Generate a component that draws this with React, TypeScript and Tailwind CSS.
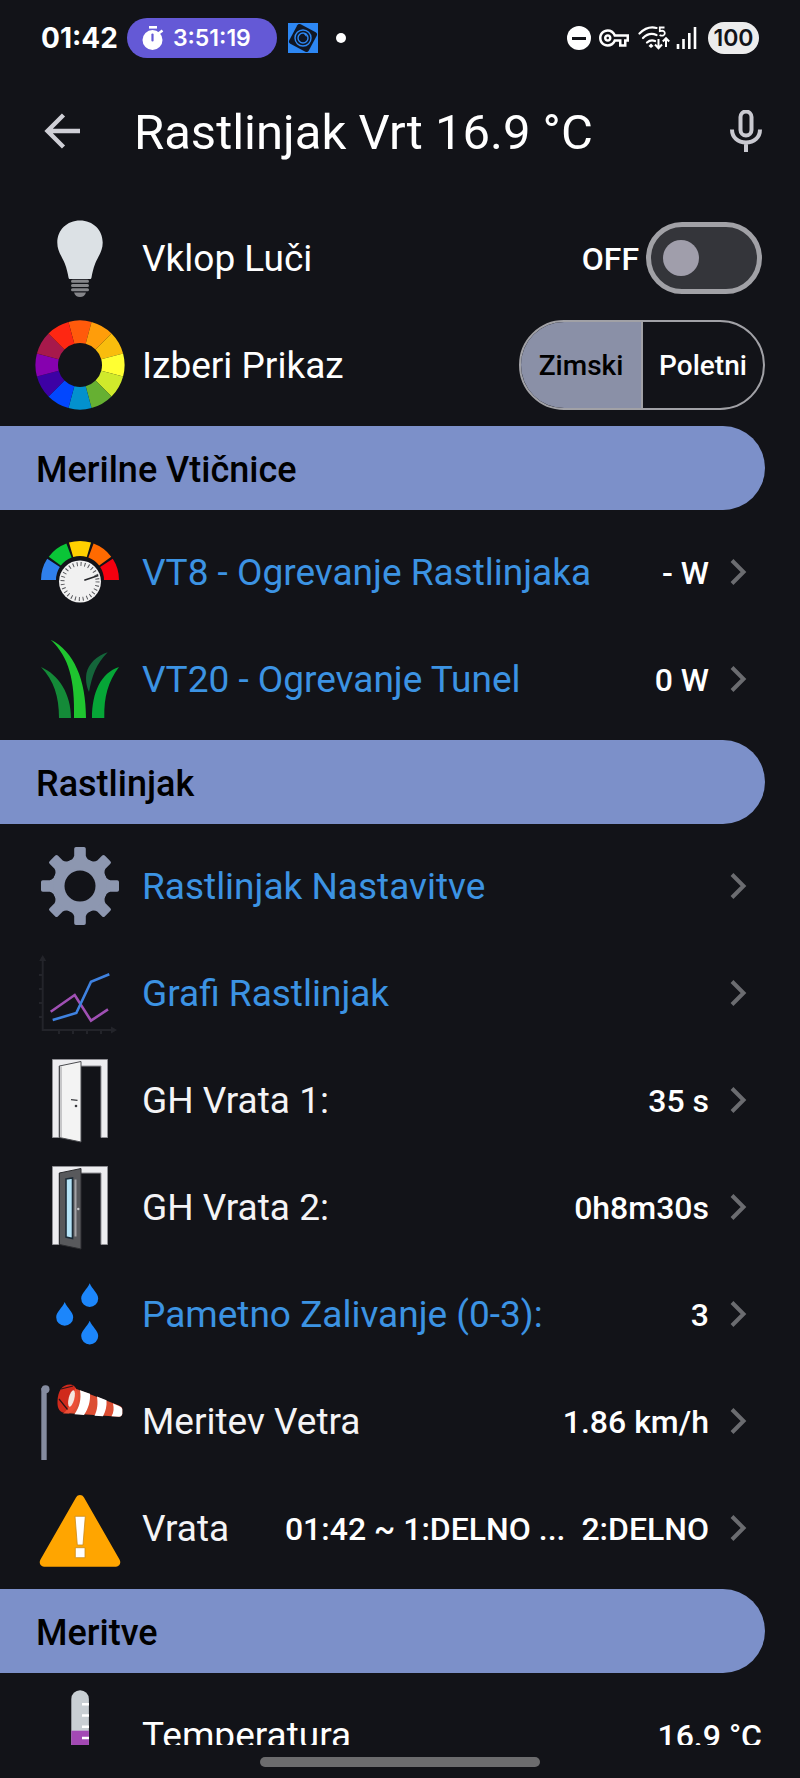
import { useState } from "react";
import type { ReactNode } from "react";
import { MdOutlineVpnKey } from "react-icons/md";

type Item = {
  label: string;
  icon: ReactNode;
  value?: string;
  accent?: boolean;
};

const wheelColors = [
  "#ff5a0b", "#ff9d0a", "#f9bd0d", "#ffff32", "#d0ea2b", "#66b032",
  "#0391ce", "#0247fe", "#3d01a4", "#8601af", "#a7194b", "#fe2712",
];

const gaugeColors = ["#2f80ed", "#0ac537", "#ffd000", "#ff6a00", "#f5000f"];

// Ring slice between two angles (degrees, 0 = right, clockwise)
function slice(cx: number, cy: number, inner: number, outer: number, from: number, to: number) {
  const pt = (r: number, deg: number) => {
    const a = (deg * Math.PI) / 180;
    return `${(cx + r * Math.cos(a)).toFixed(2)} ${(cy + r * Math.sin(a)).toFixed(2)}`;
  };
  return `M${pt(outer, from)}A${outer} ${outer} 0 0 1 ${pt(outer, to)}L${pt(inner, to)}A${inner} ${inner} 0 0 0 ${pt(inner, from)}Z`;
}

function Icon({ children }: { children: ReactNode }) {
  return (
    <svg className="w-[90px] h-[90px] shrink-0" viewBox="0 0 90 90" fill="none" aria-hidden="true">
      {children}
    </svg>
  );
}

function BulbIcon() {
  return (
    <Icon>
      <path fill="#dce1e5" d="M45 7.5C32 7.5 22.3 17 22.3 29.5c0 9 4.700 14 7.500 21 2 5 3 10 3.700 14 .2 1 .8 1.500 1.500 1.500h20c.7 0 1.300-.5 1.500-1.500.7-4 1.700-9 3.700-14 2.800-7 7.500-12 7.500-21C67.700 17 58 7.500 45 7.500z" />
      <path stroke="#85868a" strokeWidth="3" strokeLinecap="round" d="M37.500 68.200h15M37.500 72.500h15M37.500 76.800h15" />
      <path fill="#85868a" d="M39 79.500h12c-1 3-3 4.500-6 4.500s-5-1.500-6-4.500z" />
    </Icon>
  );
}

function WheelIcon() {
  return (
    <Icon>
      {wheelColors.map((color, i) => (
        <path key={color} fill={color} d={slice(45, 45, 22, 44.6, -105 + i * 30, -75 + i * 30)} />
      ))}
    </Icon>
  );
}

function GaugeIcon() {
  return (
    <Icon>
      {gaugeColors.map((color, i) => (
        <path key={color} fill={color} d={slice(45, 53, 24, 39, 180 + i * 36.8, 212.8 + i * 36.8)} />
      ))}
      <circle cx="45" cy="54.500" r="21" fill="#f1f1f1" />
      <circle cx="45" cy="54.500" r="17.500" stroke="#55565a" strokeWidth="4" strokeDasharray="1 2.930" />
      <path stroke="#26272b" strokeWidth="1.600" d="M49.300 53.300l14-4.800" />
    </Icon>
  );
}

function GrassIcon() {
  return (
    <Icon>
      <path fill="#148a38" d="M6 33c18 8 30 27 30 51H24C24 62 19 47 6 33z" />
      <path fill="#14653a" d="M72.700 18.300C61 30 57 42 54 58c-3-7-3.500-13-2.500-19 2-9 10-17 21.200-20.700z" />
      <path fill="#1fc52f" d="M15.700 5.700C39 17 51 46 51 84H39C40 46 34 23 15.700 5.700z" />
      <path fill="#06a637" d="M84 33C66 39 57 58 57 84h12.300C69 62 73 48 84 33z" />
    </Icon>
  );
}

function GearIcon() {
  return (
    <Icon>
      <g fill="#8d97b0">
        {[0, 45, 90, 135].map((deg) => (
          <path key={deg} transform={`rotate(${deg} 45 45)`} d="M41 6h8q1.800 0 1.800 1.800v7q1 4 6 5.500v49.400q-5 1.500-6 5.500v7q0 1.800-1.800 1.800h-8q-1.800 0-1.800-1.800v-7q-1-4-6-5.500V20.300q5-1.500 6-5.500v-7Q39.200 6 41 6z" />
        ))}
      </g>
      <circle cx="45" cy="45" r="22" stroke="#8d97b0" strokeWidth="10" />
      <circle cx="45" cy="45" r="15.500" fill="#121318" />
    </Icon>
  );
}

function ChartIcon() {
  return (
    <Icon>
      <path stroke="#23242a" strokeWidth="2" d="M7.700 9v73H80M4 27h4M4 41h4M4 55h4M4 69h4M24 82v4M38 82v4M52 82v4M66 82v4" />
      <path fill="#23242a" d="M7.700 7l3.500 6h-7zM82 82l-6 3.500v-7z" />
      <path stroke="#a050b4" strokeWidth="2.600" d="M15.700 63.700l24-16.700L56 72.700l17-11.400" />
      <path stroke="#3f82e0" strokeWidth="2.600" d="M17.700 72l23.600-7L56 33.700l18.300-7.400" />
    </Icon>
  );
}

function DoorFrame() {
  return (
    <path fill="#ededf0" stroke="#8f8f94" strokeWidth="1" d="M17.500 4.500h55v78h-6.500V11H24v71.500h-6.500z" />
  );
}

function WhiteDoorIcon() {
  return (
    <Icon>
      <DoorFrame />
      <path fill="#f3f3f3" stroke="#4b4c50" strokeWidth="1" d="M24.500 11L46 6.500V87l-21.500-4.500z" />
      <path stroke="#9a9a9e" strokeWidth="1" d="M26 11.500v71" />
      <path stroke="#3a3b3f" strokeWidth="1.200" d="M36 44.700l6.500.7" />
      <circle cx="41" cy="51" r="1.300" fill="#3a3b3f" />
    </Icon>
  );
}

function GlassDoorIcon() {
  return (
    <Icon>
      <DoorFrame />
      <path fill="#58595c" stroke="#2c2d30" strokeWidth="1" d="M24.500 11L46 6.500V87l-21.500-4.500z" />
      <path fill="#b4e3f7" stroke="#1d2c38" strokeWidth="1.600" d="M31 17l6.500-1v60.500L31 75z" />
      <path stroke="#a3a3a6" strokeWidth="2" d="M40.500 17.500v57" />
      <circle cx="43.300" cy="47" r="1.200" fill="#c9c9cc" />
    </Icon>
  );
}

function DropsIcon() {
  const drop = "c2.500 6 8.500 10 8.500 15.200a8.500 8.500 0 0 1-17 0c0-5.200 6-9.200 8.500-15.200z";
  return (
    <Icon>
      <path fill="#1c86fb" d={`M54.700 14.300${drop}M29.700 33${drop}M54.700 51.700${drop}`} />
    </Icon>
  );
}

function WindsockIcon() {
  return (
    <Icon>
      <path stroke="#858ca0" strokeWidth="5.400" d="M9 12v72" />
      <circle cx="10.500" cy="13.300" r="4" fill="#858ca0" />
      <path fill="#dc4e33" d="M39 12l45 17.500c2 .8 3.300 2 3.300 3.500v4.500c0 2-1.300 3.200-3.300 3.200L30 37z" />
      <path fill="#fff" d="M45 14.300l10 3.500c.5 7-1.500 15-6 21.200l-9.500-.7c5-7 7-15 5.500-24zM62 20.500l9.500 3.700c.5 6-1 11-3.500 16l-8.500-.5c3-6 3.500-12 2.500-19.200zM78 27.500l6 2.500c2 .8 3.300 2 3.300 3.500v4c0 2-1.300 3.200-3.300 3.200l-7.500-.5c2.500-4 2.500-8 1.500-12.700z" />
      <path fill="#d02a1c" d="M35 8.500c5 0 8 5 7 13-1 9-6 15.500-11 15.500-6 0-9-4-8.500-12C23 15 27 8.500 35 8.500z" />
      <path fill="#ec4f36" d="M40 12c5 5 5 20-6 25.500h-6C35 33 38 20 40 12z" />
      <ellipse cx="36.500" cy="22.500" rx="2.800" ry="8.500" transform="rotate(14 36.500 22.500)" fill="#f5e6e0" />
      <path stroke="#2c1518" strokeWidth="1.200" d="M24 23l8.500 10.500M26 13l12-3" />
    </Icon>
  );
}

function WarningIcon() {
  return (
    <Icon>
      <path fill="#ffa500" d="M41 14.500c1.800-3.300 6.200-3.300 8 0l35.500 62c2 3.500 0 7.200-3.500 7.200H9c-3.500 0-5.500-3.700-3.500-7.200z" />
      <path fill="#fff" stroke="#c98a1c" strokeWidth=".8" d="M40 33.300h10.300L48 62h-5.700zM40.300 64.700H50v10h-9.700z" />
    </Icon>
  );
}

function ThermometerIcon() {
  return (
    <Icon>
      <path fill="#c9cfd4" d="M36.300 9a8.800 8.800 0 0 1 17.600 0v81H36.300z" />
      <path fill="#a349b4" d="M36.300 40.700h17.600V90H36.300z" />
      <path stroke="#fff" strokeWidth="2.600" d="M47 14.300h7M47 25.500h7M47 36.700h7M47 48h7" />
    </Icon>
  );
}

function Chevron() {
  return (
    <svg className="w-[18px] h-[28px] shrink-0 ml-[21px] mr-[52px]" viewBox="0 0 18 28" fill="none" aria-hidden="true">
      <path stroke="#6b6c70" strokeWidth="4" d="M2 2.500L13.500 14 2 25.500" />
    </svg>
  );
}

const sockets: Item[] = [
  { label: "VT8 - Ogrevanje Rastlinjaka", icon: <GaugeIcon />, value: "- W", accent: true },
  { label: "VT20 - Ogrevanje Tunel", icon: <GrassIcon />, value: "0 W", accent: true },
];

const greenhouse: Item[] = [
  { label: "Rastlinjak Nastavitve", icon: <GearIcon />, accent: true },
  { label: "Grafi Rastlinjak", icon: <ChartIcon />, accent: true },
  { label: "GH Vrata 1:", icon: <WhiteDoorIcon />, value: "35 s" },
  { label: "GH Vrata 2:", icon: <GlassDoorIcon />, value: "0h8m30s" },
  { label: "Pametno Zalivanje (0-3):", icon: <DropsIcon />, value: "3", accent: true },
  { label: "Meritev Vetra", icon: <WindsockIcon />, value: "1.86 km/h" },
  { label: "Vrata", icon: <WarningIcon />, value: "01:42 ~ 1:DELNO ...  2:DELNO" },
];

function SectionHeader({ title }: { title: string }) {
  return (
    <h2 className="h-[84px] mr-[35px] pl-[36px] pt-[4px] flex items-center shrink-0 rounded-r-full bg-[#7c90c9] text-black text-[36px] font-medium">
      {title}
    </h2>
  );
}

function LinkRow({ item }: { item: Item }) {
  return (
    <a href="#" className="h-[107px] pl-[35px] flex items-center">
      {item.icon}
      <span className={`ml-[17px] pt-[2px] text-[37px] whitespace-nowrap ${item.accent ? "text-[#3c93e3]" : "text-[#f4f4f6]"}`}>
        {item.label}
      </span>
      <span className="ml-auto pt-[2px] text-[32px] font-medium whitespace-pre">{item.value}</span>
      <Chevron />
    </a>
  );
}

function StatusBar() {
  return (
    <div className="h-[76px] pl-[41px] pr-[41px] flex items-center shrink-0 font-['Inter',sans-serif]">
      <span className="text-[28px] font-bold">01:42</span>
      <div className="ml-[9px] w-[150px] h-[40px] pl-[15px] flex items-center gap-[9px] rounded-full bg-[#6459d6]">
        <svg className="w-[22px] h-[26px] shrink-0" viewBox="0 0 22 26" fill="none" aria-hidden="true">
          <path fill="#fff" d="M7 1h8v2.600H7z" />
          <circle cx="10.500" cy="15" r="10" fill="#fff" />
          <path stroke="#fff" strokeWidth="2.600" d="M16.500 8.500l4-3" />
          <path stroke="#6459d6" strokeWidth="2.200" strokeLinecap="round" d="M10.500 9.500v6" />
        </svg>
        <span className="text-[23px] font-semibold">3:51:19</span>
      </div>
      <svg className="ml-[11px] w-[30px] h-[30px]" viewBox="0 0 30 30" fill="none" aria-hidden="true">
        <path fill="#2d87f3" d="M0 0h30v30H0z" />
        <rect x="4" y="4" width="22" height="22" rx="2.500" fill="#101623" transform="rotate(28 15 15)" />
        <circle cx="15" cy="15" r="8" stroke="#2d87f3" strokeWidth="1.400" />
        <circle cx="15" cy="15" r="5" stroke="#2d87f3" strokeWidth="1.400" />
        <path fill="#2d87f3" d="M15.500 10.500h3v3.500z" />
      </svg>
      <span className="ml-[18px] w-[10px] h-[10px] rounded-full bg-white" />

      <div className="ml-auto flex items-center">
        <span className="w-[24px] h-[24px] flex items-center justify-center rounded-full bg-white">
          <span className="w-[14px] h-[3px] bg-[#121318]" />
        </span>
        <MdOutlineVpnKey className="ml-[8px] w-[30px] h-[30px]" />
        <svg className="ml-[9px] w-[32px] h-[26px]" viewBox="0 0 32 26" fill="none" aria-hidden="true">
          <path stroke="#fff" strokeWidth="2.200" strokeLinecap="round" d="M1.500 8.500C7 3 13 1.500 18.500 3M5 13c4-4 9-5 13.500-3M9 17.500c2.500-2.200 5-2.700 8-1.500" />
          <path fill="#fff" d="M13 18.500l2.500 2.500L13 23l-2.500-2z" />
          <path stroke="#fff" strokeWidth="1.800" d="M26.500 2.500h-4.700v3.600c4-1 5 .4 5 2.200 0 2.500-3 3-5.200 1.600" />
          <path stroke="#fff" strokeWidth="2" d="M20.500 14v9M17 19.500l3.500 3.700 3.500-3.700M28 22v-8M24.800 16.500l3.200-3.300 3.200 3.300" />
        </svg>
        <svg className="ml-[6px] w-[21px] h-[24px]" viewBox="0 0 21 24" fill="none" aria-hidden="true">
          <path stroke="#fff" strokeWidth="2.600" d="M2 23v-5M7.500 23V13M13.300 23V7M19 23V1" />
        </svg>
        <span className="ml-[11px] w-[51px] h-[32px] flex items-center justify-center rounded-full bg-[#ececec] text-[#121318] text-[23px] font-semibold">
          100
        </span>
      </div>
    </div>
  );
}

export default function App() {
  const [lightOn, setLightOn] = useState(false);
  const [view, setView] = useState("Zimski");

  return (
    <div className="h-screen flex flex-col bg-[#121318] text-white font-['Roboto',sans-serif]">
      <StatusBar />

      <header className="h-[120px] pl-[44px] pr-[37px] pb-[8px] flex items-center shrink-0">
        <button aria-label="Nazaj">
          <svg className="w-[38px] h-[38px]" viewBox="0 0 38 38" fill="none">
            <path stroke="#cfcfd6" strokeWidth="4.400" d="M36 18H4M19.500 2L3.500 18l16 16" />
          </svg>
        </button>
        <h1 className="ml-[52px] pt-[2px] text-[49px] whitespace-nowrap">Rastlinjak Vrt 16.9 °C</h1>
        <button aria-label="Glasovno iskanje" className="ml-auto">
          <svg className="w-[34px] h-[44px]" viewBox="0 0 34 44" fill="none">
            <rect x="11.500" y="1.500" width="11" height="24" rx="5.500" stroke="#c9c9d0" strokeWidth="4" />
            <path stroke="#c9c9d0" strokeWidth="4" d="M3 19.500c0 8 6 13 14 13s14-5 14-13M17 32.500V42" />
          </svg>
        </button>
      </header>

      <main className="flex-1 min-h-0 overflow-hidden">
        <div className="pt-[8px] pb-[8px]">
          <div className="h-[107px] pl-[35px] pr-[38px] flex items-center">
            <BulbIcon />
            <label htmlFor="light" className="ml-[17px] pt-[2px] text-[37px]">Vklop Luči</label>
            <span className="ml-auto pt-[2px] text-[32px] font-medium">{lightOn ? "ON" : "OFF"}</span>
            <input
              id="light"
              type="checkbox"
              role="switch"
              checked={lightOn}
              onChange={(e) => setLightOn(e.target.checked)}
              className="ml-[7px] w-[116px] h-[72px] px-[12px] shrink-0 appearance-none flex items-center rounded-full border-[5px] border-[#a1a1a6] bg-[#34353a] before:block before:w-[36px] before:h-[36px] before:rounded-full before:bg-[#a09eab] checked:justify-end"
            />
          </div>
          <div className="h-[107px] pl-[35px] pr-[35px] flex items-center">
            <WheelIcon />
            <span className="ml-[17px] pt-[2px] text-[37px]">Izberi Prikaz</span>
            <div className="ml-auto h-[90px] w-[246px] flex rounded-full border-2 border-[#a1a1a6] overflow-hidden text-[28px] font-medium">
              {["Zimski", "Poletni"].map((name) => (
                <button
                  key={name}
                  aria-pressed={view === name}
                  onClick={() => setView(name)}
                  className={`flex-1 pt-[2px] first:border-r-2 first:border-[#a1a1a6] ${view === name ? "bg-[#8a90a7] text-black" : "text-white"}`}
                >
                  {name}
                </button>
              ))}
            </div>
          </div>
        </div>

        <SectionHeader title="Merilne Vtičnice" />
        <div className="py-[8px]">
          {sockets.map((item) => <LinkRow key={item.label} item={item} />)}
        </div>

        <SectionHeader title="Rastlinjak" />
        <div className="py-[8px]">
          {greenhouse.map((item) => <LinkRow key={item.label} item={item} />)}
        </div>

        <SectionHeader title="Meritve" />
        <div className="py-[8px]">
          <div className="h-[107px] pl-[35px] pr-[38px] flex items-center">
            <ThermometerIcon />
            <span className="ml-[17px] pt-[2px] text-[37px]">Temperatura</span>
            <span className="ml-auto pt-[2px] text-[32px] font-medium">16.9 °C</span>
          </div>
        </div>
      </main>

      {/* gesture bar */}
      <div className="h-[33px] pt-[12px] flex justify-center shrink-0">
        <span className="w-[280px] h-[10px] rounded-full bg-[#6c6c6e]" />
      </div>
    </div>
  );
}
